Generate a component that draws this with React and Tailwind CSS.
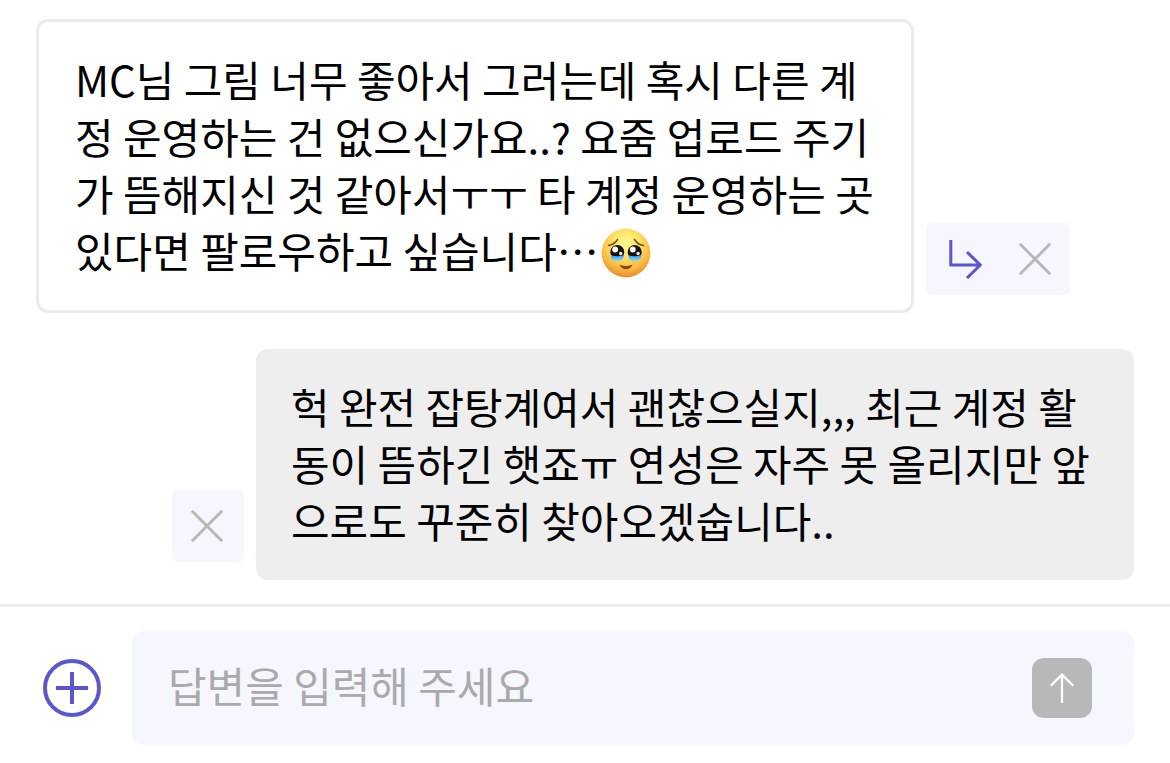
const messages = {
  received: ['MC님 그림 너무 좋아서 그러는데 혹시 다른 계', '정 운영하는 건 없으신가요..? 요줌 업로드 주기', '가 뜸해지신 것 같아서ㅜㅜ 타 계정 운영하는 곳', '있다면 팔로우하고 싶습니다…'],
  sent: ['헉 완전 잡탕계여서 괜찮으실지,,, 최근 계정 활', '동이 뜸하긴 햇죠ㅠ 연성은 자주 못 올리지만 앞', '으로도 꾸준히 찾아오겠숩니다..'],
};

const CloseIcon = () => (
  <svg width="34" height="34" viewBox="0 0 34 34" fill="none" stroke="#b6b6b6" strokeWidth="2.8">
    <path d="M1.8 1.8L32.2 32.2M32.2 1.8L1.8 32.2" />
  </svg>
);

const ReplyIcon = () => (
  <svg width="34" height="40" viewBox="0 0 34 40" fill="none" stroke="#5c57c9" strokeWidth="3">
    <path d="M1.8 1V26H32M18 13L31.2 26L18 39" />
  </svg>
);

// Teary face shown at the end of the received message
const TearyFace = () => (
  <svg width="50" height="50" viewBox="0 0 50 50" className="mt-1.5 ml-0.5 shrink-0">
    <defs>
      <radialGradient id="face" cx="50%" cy="30%" r="70%">
        <stop offset="0" stopColor="#fffa91" />
        <stop offset="0.4" stopColor="#fde168" />
        <stop offset="0.75" stopColor="#f9b944" />
        <stop offset="1" stopColor="#e58c2e" />
      </radialGradient>
      <linearGradient id="tear" x1="0" y1="0" x2="0" y2="1">
        <stop offset="0" stopColor="#3a9be0" />
        <stop offset="1" stopColor="#8bd7f5" />
      </linearGradient>
    </defs>
    <circle cx="25" cy="25" r="24.4" fill="url(#face)" />
    <path d="M7.5 17.5Q13.5 16.5 16.5 11.5M33.5 11.5Q36.5 16.5 42.5 17.5" stroke="#7b4b12" strokeWidth="1.5" fill="none" strokeLinecap="round" />
    <circle cx="16.3" cy="24" r="7" fill="#17100d" />
    <circle cx="33.7" cy="24" r="7" fill="#17100d" />
    <path d="M9.7 27Q16.3 29.5 22.9 27Q22.5 33 16.3 33Q10 33 9.7 27M27.1 27Q33.7 29.5 40.3 27Q40 33 33.7 33Q27.5 33 27.1 27" fill="url(#tear)" />
    <circle cx="14.2" cy="21.5" r="2.9" fill="white" />
    <circle cx="31.8" cy="21.5" r="2.9" fill="white" />
    <circle cx="19.7" cy="25.5" r="1.7" fill="#e9edf2" />
    <circle cx="37.1" cy="25.5" r="1.7" fill="#e9edf2" />
    <path d="M18.5 36.5Q25 39.5 31.5 36.5Q29.5 41.2 25 41.2Q20.5 41.2 18.5 36.5Z" fill="#86480f" />
  </svg>
);

const App = () => {
  return (
    <main className="h-[763px] w-[1170px] overflow-hidden bg-white text-[41.95px] leading-[57px] text-black font-['Noto_Sans_CJK_KR',sans-serif]">
      <section className="flex h-[604px] flex-col px-9 pt-[19px]">
        <div className="flex items-end gap-3">
          <div className="h-[294px] w-[878px] rounded-xl border-3 border-[#ebebeb] px-9 pt-7">
            {messages.received.map((line, i) => (
              <p key={line} className="flex items-center whitespace-nowrap">
                {line}
                {i === 3 && <TearyFace />}
              </p>
            ))}
          </div>
          <div className="mb-[18px] flex h-[72px] w-36 items-center justify-between rounded-md bg-[#f6f6ff] pr-[18px] pl-[23px]">
            <ReplyIcon />
            <CloseIcon />
          </div>
        </div>
        <div className="mt-9 flex items-end justify-end gap-3">
          <button className="mb-[18px] flex size-[72px] items-center rounded-md bg-[#f6f6ff] pl-[18px]">
            <CloseIcon />
          </button>
          <div className="h-[231px] w-[878px] rounded-xl bg-[#eeeeee] px-[35px] pt-7">
            {messages.sent.map((line) => (
              <p key={line} className="whitespace-nowrap">{line}</p>
            ))}
          </div>
        </div>
      </section>
      <footer className="flex h-[159px] items-start border-t-3 border-[#ebebeb] pt-6 pr-9 pl-[42px]">
        <button className="mt-[27px] mr-[30px]">
          <svg width="60" height="60" viewBox="0 0 60 60" fill="none" stroke="#5c57c9" strokeWidth="4">
            <circle cx="30" cy="30" r="27" />
            <path d="M14 30H46M30 14V46" />
          </svg>
        </button>
        <div className="flex h-[114px] flex-1 items-center justify-between rounded-xl bg-[#f6f6ff] pr-[42px] pl-9">
          <span className="pb-[7px] text-[#aaaaaa]">답변을 입력해 주세요</span>
          <button className="flex size-[60px] items-center justify-center rounded-xl bg-[#b8b8b8]">
            <svg width="26" height="30" viewBox="0 0 26 30" fill="none" stroke="white" strokeWidth="2.3">
              <path d="M13 30V2M1.8 12.8L13 1.6L24.2 12.8" />
            </svg>
          </button>
        </div>
      </footer>
    </main>
  );
};

export default App;
